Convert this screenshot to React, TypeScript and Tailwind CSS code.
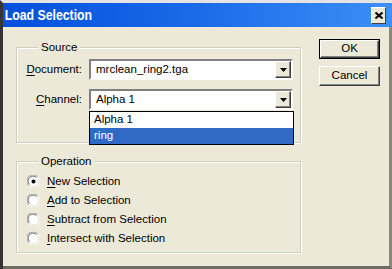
import React from "react";

const font = { fontFamily: '"Liberation Sans", Arial, sans-serif' };

function Arrow() {
  return (
    <div className="w-[16px] h-[17px] bg-[#ece9d8] border border-t-white border-l-white border-r-[#404040] border-b-[#404040] shadow-[inset_-1px_-1px_0_#808080] flex items-center justify-center">
      <svg width="7" height="4" viewBox="0 0 7 4">
        <path d="M0 0H7L3.5 4Z" fill="#000" />
      </svg>
    </div>
  );
}

function Combo({ value }: { value: string }) {
  return (
    <div className="w-[204px] h-[21px] bg-white border-2 border-t-[#808080] border-l-[#808080] border-r-white border-b-white flex items-center justify-between pr-0">
      <span className="pl-[5px] text-black">{value}</span>
      <Arrow />
    </div>
  );
}

function Radio({ checked }: { checked?: boolean }) {
  return (
    <svg width="13" height="13" viewBox="0 0 13 13">
      <circle cx="6.5" cy="6.5" r="6" fill="#fff" />
      <path d="M1.5 10.5A5.8 5.8 0 0 1 10.5 1.5" stroke="#9a9a9a" strokeWidth="1" fill="none" />
      <path d="M2.5 9.5A4.6 4.6 0 0 1 9.5 2.5" stroke="#6a6a6a" strokeWidth="1" fill="none" />
      <path d="M11.5 2.5A5.8 5.8 0 0 1 2.5 11.5" stroke="#ffffff" strokeWidth="1" fill="none" />
      <path d="M10.5 3.5A4.6 4.6 0 0 1 3.5 10.5" stroke="#e0ddd0" strokeWidth="1" fill="none" />
      {checked && <circle cx="6.5" cy="6.5" r="2" fill="#000" />}
    </svg>
  );
}

function RadioRow({ checked, k, rest }: { checked?: boolean; k: string; rest: string }) {
  return (
    <div className="h-[19px] flex items-center">
      <Radio checked={checked} />
      <span className="ml-[7px]">
        <span className="underline underline-offset-[2px]">{k}</span>
        {rest}
      </span>
    </div>
  );
}

function Group({ title, className, children }: { title: string; className: string; children: React.ReactNode }) {
  return (
    <div className={`relative w-[285px] border border-[#d0d0bf] shadow-[inset_1px_1px_0_#fff,1px_1px_0_#fff] ${className}`}>
      <span className="absolute top-[-8px] left-[21px] bg-[#ece9d8] px-[3px] leading-[14px]">{title}</span>
      {children}
    </div>
  );
}

function Button({ label, def }: { label: string; def?: boolean }) {
  return (
    <div className={`w-[61px] h-[20px] ${def ? "border border-black" : ""}`}>
      <div className="w-full h-full bg-[#ece9d8] border border-t-white border-l-white border-r-[#404040] border-b-[#404040] shadow-[inset_-1px_-1px_0_#808080] flex items-center justify-center">
        {label}
      </div>
    </div>
  );
}

export default function App() {
  return (
    <div
      className="w-[392px] h-[269px] flex flex-col bg-[#ece9d8] border-l-[3px] border-l-[#353535] border-t-[3px] border-t-[#e4e4e4] text-[11.5px] text-black overflow-hidden"
      style={font}
    >
      <div className="h-[24px] shrink-0 flex items-center justify-between bg-gradient-to-r from-[#0350dc] via-[#1a6ae8] to-[#3c90f6]">
        <span className="pl-[2px] text-white font-bold text-[15px] scale-x-[0.82] origin-left whitespace-nowrap">
          Load Selection
        </span>
        <div className="mr-[6px] w-[15px] h-[17px] bg-[#ece9d8] border border-t-white border-l-white border-r-[#404040] border-b-[#404040] flex items-center justify-center">
          <svg width="8" height="7" viewBox="0 0 8 7">
            <path d="M0.5 0.5L7.5 6.5M7.5 0.5L0.5 6.5" stroke="#000" strokeWidth="2" />
          </svg>
        </div>
      </div>
      <div className="flex-1 flex border-r-[3px] border-r-[#8a887c] border-b-[3px] border-b-[#6e6c62]">
        <div className="ml-[13px] mt-[20px] flex flex-col">
          <Group title="Source" className="h-[96px] pt-[11px]">
            <div className="flex items-center">
              <span className="w-[65px] text-right">
                <span className="underline underline-offset-[2px]">D</span>ocument:
              </span>
              <div className="ml-[7px]">
                <Combo value="mrclean_ring2.tga" />
              </div>
            </div>
            <div className="flex items-center mt-[9px]">
              <span className="w-[65px] text-right">
                <span className="underline underline-offset-[2px]">C</span>hannel:
              </span>
              <div className="ml-[7px] relative">
                <Combo value="Alpha 1" />
                <div className="absolute top-[22px] left-0 w-[205px] border border-black bg-white z-10">
                  <div className="h-[16px] flex items-center pl-[4px]">Alpha 1</div>
                  <div className="h-[16px] flex items-center pl-[4px] bg-[#316ac5] text-white">ring</div>
                </div>
              </div>
            </div>
          </Group>
          <Group title="Operation" className="mt-[18px] h-[92px] pt-[10px] pl-[10px]">
            <RadioRow checked k="N" rest="ew Selection" />
            <RadioRow k="A" rest="dd to Selection" />
            <RadioRow k="S" rest="ubtract from Selection" />
            <RadioRow k="I" rest="ntersect with Selection" />
          </Group>
        </div>
        <div className="ml-[18px] mt-[12px] flex flex-col gap-[7px]">
          <Button label="OK" def />
          <Button label="Cancel" />
        </div>
      </div>
    </div>
  );
}
